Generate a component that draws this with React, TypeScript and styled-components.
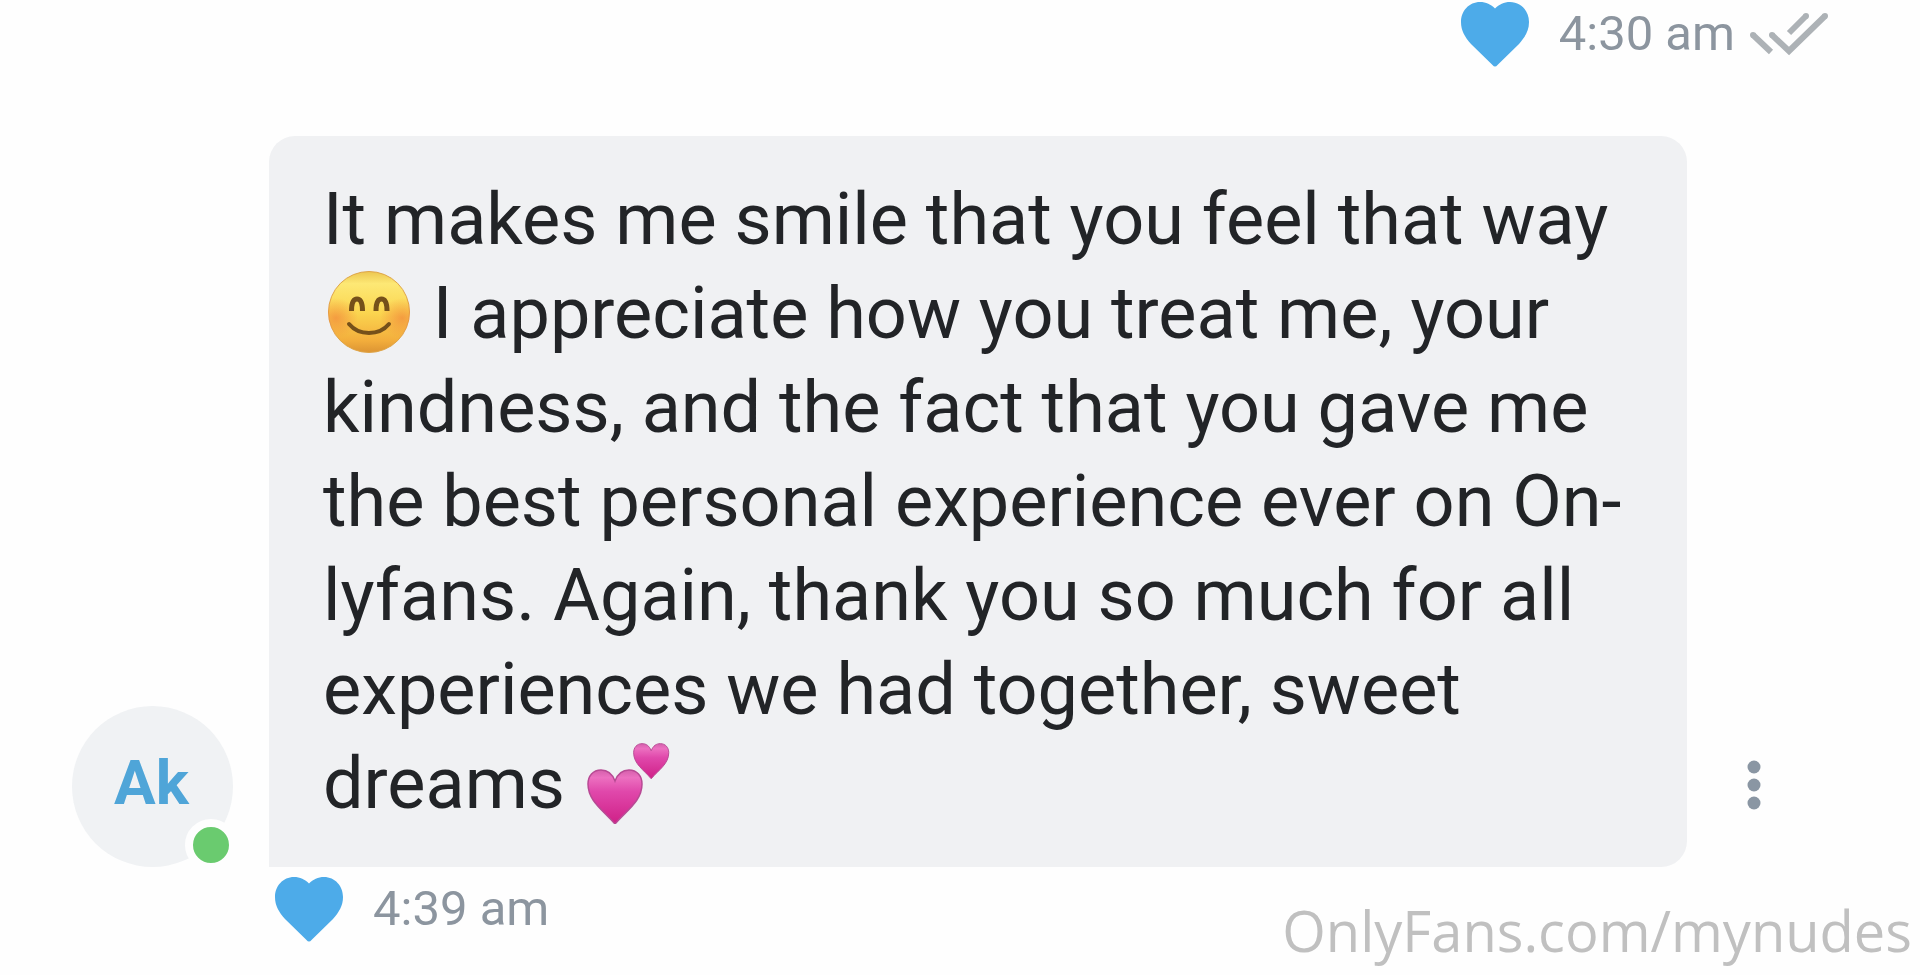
import React from 'react';
import styled, { createGlobalStyle } from 'styled-components';

const GlobalStyle = createGlobalStyle`
  * { box-sizing: border-box; }
  body {
    margin: 0;
    background: #fefefe;
    font-family: Roboto, "Liberation Sans", sans-serif;
  }
  button { border: 0; padding: 0; background: none; font: inherit; cursor: pointer; }
`;

const Chat = styled.main`
  position: relative;
  display: flex;
  flex-direction: column;
  min-height: 100vh;
  overflow: hidden;
`;

const Meta = styled.div<{ $own?: boolean }>`
  display: flex;
  align-items: center;
  justify-content: ${(p) => (p.$own ? 'flex-end' : 'flex-start')};
  height: 68px;
  margin-top: ${(p) => (p.$own ? '0' : '8px')};
  padding: ${(p) => (p.$own ? '0 90px 0 0' : '0 0 0 275px')};
`;

const LikeButton = styled.button`
  display: block;
  height: 65px;
  margin-right: 30px;
  svg { display: block; }
`;

const Time = styled.time`
  font-size: 49px;
  line-height: 56px;
  color: #8c959f;
`;

const ReadMark = styled.svg`
  margin-left: 14px;
`;

const MessageRow = styled.article`
  display: flex;
  align-items: flex-end;
  gap: 36px;
  margin-top: 68px;
  padding: 0 135px 0 72px;
`;

const Avatar = styled.a`
  position: relative;
  display: flex;
  flex: none;
  align-items: center;
  justify-content: center;
  width: 161px;
  height: 161px;
  padding: 0 2px 8px 0;
  border-radius: 50%;
  background: #f0f2f4;
  color: #4fa5d8;
  font-size: 62px;
  font-weight: 700;
  text-decoration: none;
`;

const OnlineDot = styled.span`
  position: absolute;
  right: -4px;
  bottom: -4px;
  width: 52px;
  height: 52px;
  border: 8px solid #fefefe;
  border-radius: 50%;
  background: #6acb6f;
`;

const Bubble = styled.p`
  flex: 1;
  margin: 0;
  padding: 37px 54px 36px;
  border-radius: 26px 26px 26px 0;
  background: #f0f1f3;
  color: #222427;
  font-size: 72px;
  line-height: 94px;
`;

const Emoji = styled.svg`
  width: 84px;
  height: 84px;
  margin: 0 4px;
  vertical-align: -16px;
`;

const MenuButton = styled.button`
  display: flex;
  flex: none;
  align-items: center;
  justify-content: center;
  width: 62px;
  height: 164px;
`;

const Watermark = styled.div`
  position: absolute;
  right: 8px;
  bottom: 5px;
  color: #c0c0c0;
  font-family: "Open Sans", "Noto Sans", sans-serif;
  font-size: 56px;
  line-height: 80px;
`;

const Like = () => (
  <LikeButton type="button" aria-label="Like">
    <svg width="68" height="65" viewBox="0 0 68 65">
      <path
        fill="#4dabe9"
        d="M34 6.5C30 2.5 25 0 19 0 8 0 0 9 0 20c0 9 4 15 10 22l21.5 21q2.5 3 5 0L58 42c6-7 10-13 10-22C68 9 60 0 49 0c-6 0-11 2.5-15 6.5Z"
      />
    </svg>
  </LikeButton>
);

const Smile = () => (
  <Emoji viewBox="0 0 84 84" role="img" aria-label="Smiling face">
    <defs>
      <linearGradient id="face" x1="0" y1="0" x2="0" y2="1">
        <stop offset="0" stopColor="#ecc650" />
        <stop offset="0.15" stopColor="#fde875" />
        <stop offset="0.5" stopColor="#fbd650" />
        <stop offset="0.85" stopColor="#f3ae3c" />
        <stop offset="1" stopColor="#dc9433" />
      </linearGradient>
      <radialGradient id="cheek">
        <stop offset="0" stopColor="#f28c3c" stopOpacity="0.75" />
        <stop offset="1" stopColor="#f28c3c" stopOpacity="0" />
      </radialGradient>
      <clipPath id="faceClip">
        <circle cx="42" cy="42" r="41" />
      </clipPath>
    </defs>
    <circle cx="42" cy="42" r="40.5" fill="url(#face)" stroke="#dfa548" strokeWidth="1" />
    <g clipPath="url(#faceClip)">
      <ellipse cx="9" cy="48" rx="22" ry="20" fill="url(#cheek)" />
      <ellipse cx="75" cy="48" rx="22" ry="20" fill="url(#cheek)" />
    </g>
    <g fill="none" stroke="#75501a">
      <path strokeWidth="5" d="M24.5 41c0-8 2-12 5.5-12s5.5 4 5.5 12M49 41c0-8 2-12 5.5-12s5.5 4 5.500 12" />
      <path strokeWidth="4" strokeLinecap="round" d="M22 54c10 12 30 12 40 0" />
    </g>
  </Emoji>
);

const HEART = 'M28 12C25 4 20 1 14 1 6 1 1 7 1 15c0 17 15 26 27 40 12-14 27-23 27-40C55 7 50 1 42 1c-6 0-11 3-14 11Z';

const TwoHearts = () => (
  <Emoji viewBox="0 0 84 84" role="img" aria-label="Two hearts">
    <defs>
      <linearGradient id="pink" x1="0" y1="0" x2="0" y2="1">
        <stop offset="0" stopColor="#d460ac" />
        <stop offset="0.14" stopColor="#ec70c0" />
        <stop offset="0.4" stopColor="#e048ab" />
        <stop offset="1" stopColor="#cf2087" />
      </linearGradient>
    </defs>
    <g fill="url(#pink)" stroke="#b84a94" strokeWidth="1.5">
      <path transform="translate(0 29)" d={HEART} />
      <path transform="translate(46 3) scale(0.65)" d={HEART} />
    </g>
  </Emoji>
);

export default function App() {
  return (
    <>
      <GlobalStyle />
      <Chat>
        <Meta $own>
          <Like />
          <Time>4:30 am</Time>
          <ReadMark width="81" height="46" viewBox="0 0 81 46" role="img" aria-label="Read">
            <g fill="none" stroke="#adb2b6" strokeWidth="6">
              <path d="M4 24l18 17M23 24l17 16L76 5M40 22L57 5" />
            </g>
            <g fill="#adb2b6">
              <circle cx="4" cy="24" r="3" />
              <circle cx="23" cy="24" r="3" />
              <circle cx="76" cy="5" r="3" />
              <circle cx="57" cy="5" r="3" />
            </g>
          </ReadMark>
        </Meta>
        <MessageRow>
          <Avatar href="#profile">
            Ak
            <OnlineDot />
          </Avatar>
          <Bubble>
            It makes me smile that you feel that way <Smile /> I appreciate how you treat me, your
            kindness, and the fact that you gave me the best personal experience ever on On-lyfans.
            Again, thank you so much for all experiences we had together, sweet dreams{' '}
            <TwoHearts />
          </Bubble>
          <MenuButton type="button" aria-label="More">
            <svg width="14" height="50" viewBox="0 0 14 50" fill="#8a96a3">
              <circle cx="7" cy="7" r="6.5" />
              <circle cx="7" cy="25" r="6.5" />
              <circle cx="7" cy="43" r="6.5" />
            </svg>
          </MenuButton>
        </MessageRow>
        <Meta>
          <Like />
          <Time>4:39 am</Time>
        </Meta>
        <Watermark>OnlyFans.com/mynudes</Watermark>
      </Chat>
    </>
  );
}
